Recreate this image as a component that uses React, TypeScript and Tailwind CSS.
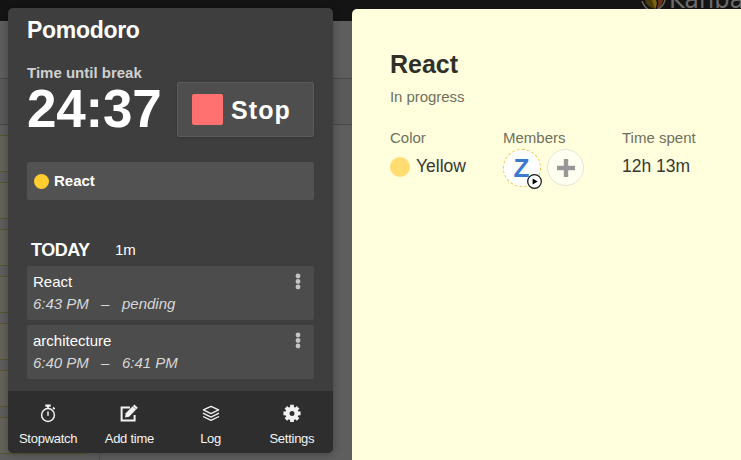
import React from "react";

const navItems = [
  { label: "Stopwatch", icon: <StopwatchIcon /> },
  { label: "Add time", icon: <EditIcon /> },
  { label: "Log", icon: <LayersIcon /> },
  { label: "Settings", icon: <GearIcon /> },
];

const entries = [
  { name: "React", from: "6:43 PM", to: "pending" },
  { name: "architecture", from: "6:40 PM", to: "6:41 PM" },
];

function StopwatchIcon() {
  return (
    <svg width="18" height="20" viewBox="0 0 18 20" fill="none" stroke="#f2f2f2">
      <circle cx="9" cy="12" r="6.4" strokeWidth="1.5" />
      <path d="M6.3 2.7h5.4" strokeWidth="2.2" />
      <path d="M9 3v2.5M14 4.5l1.6 1.6" strokeWidth="1.8" />
      <path d="M9 8.6v4.2" strokeWidth="1.5" />
    </svg>
  );
}

function EditIcon() {
  return (
    <svg width="18" height="20" viewBox="0 0 18 20" fill="none" stroke="#f2f2f2">
      <path d="M10 4.6H1.6v13h13V12" strokeWidth="2" />
      <path d="M5 14.4l.7-4.2L14.4 1.4l3.4 3.4-8.7 8.9z" fill="#f2f2f2" stroke="none" />
      <path d="M12.6 3l3.6 3.6" stroke="#2e2e2e" strokeWidth=".5" />
    </svg>
  );
}

function LayersIcon() {
  return (
    <svg width="18" height="20" viewBox="0 0 18 20" fill="none" stroke="#f2f2f2" strokeWidth="1.3" strokeLinejoin="round">
      <path d="M9 3.3l7.6 3.6L9 10.6 1.4 6.9z" />
      <path d="M1 10.2l8 3.9 8-3.9M1 13.5l8 3.9 8-3.9" />
    </svg>
  );
}

function GearIcon() {
  return (
    <svg width="18" height="20" viewBox="0 0 18 20" fill="none" stroke="#f2f2f2">
      <circle cx="9" cy="10.4" r="4.6" strokeWidth="4.2" />
      <path
        d="M9 1.8v3M9 16v3M.4 10.4h3M14.6 10.4h3M2.9 4.3l2 2M13.1 14.5l2 2M15.1 4.3l-2 2M4.9 14.5l-2 2"
        strokeWidth="3.8"
      />
    </svg>
  );
}

function Dots() {
  return (
    <svg width="6" height="17" viewBox="0 0 6 17" fill="#c4c4c4">
      <circle cx="3" cy="3" r="2.4" />
      <circle cx="3" cy="8.5" r="2.4" />
      <circle cx="3" cy="14" r="2.4" />
    </svg>
  );
}

function Board() {
  return (
    <div className="flex h-full flex-col bg-[#5e5e5e]">
      <div className="flex h-[21px] shrink-0 justify-end overflow-hidden bg-[#141414]">
        <svg width="28" height="12" viewBox="0 0 28 12" className="shrink-0">
          <path d="M4 0q1 7 11 9l-3-9z" fill="#4b3d0b" />
          <path d="M11 0l3 9q3-5 1-9z" fill="#7c6510" />
          <path d="M17 0q1 4-1 9 5-2 6-9z" fill="#693416" />
          <path d="M1 1q2 6 7 9M24 0q-1 6-8 10" fill="none" stroke="#686868" strokeWidth="1.5" />
        </svg>
        <div className="-mt-[14px] w-[72px] overflow-hidden font-['DejaVu_Sans',sans-serif] text-[24px] leading-[28px] whitespace-nowrap text-[#6c6c6c]">
          Kanba
        </div>
      </div>
      <div className="h-[58px] shrink-0 border-b border-[#484848]" />
      <div className="h-[46px] shrink-0 border-b border-[#484848] bg-[#5a5a5a]" />
      <div className="flex flex-1">
        <div className="flex w-[100px] flex-col gap-[10px] border-r border-[#505050] pt-[10px] pr-3">
          {[0, 1, 2, 3, 4, 5, 6].map((i) => (
            <div key={i} className="h-[37px] shrink-0 border-y border-[#5b552c] bg-[#64635a]" />
          ))}
        </div>
      </div>
    </div>
  );
}

function Timer() {
  return (
    <section className="flex h-[445px] w-[325px] flex-col overflow-hidden rounded-[5px] bg-[#3e3e3e] text-[15px] text-white shadow-[0_1px_8px_rgba(0,0,0,0.3)]">
      <div className="flex flex-1 flex-col px-[19px]">
        <h1 className="mt-[9px] text-[23px] leading-[26px] font-bold tracking-[-0.3px]">Pomodoro</h1>
        <div className="mt-[21px] flex h-[73px] justify-between">
          <div>
            <div className="leading-[17px] font-bold text-[#d0d0d0]">Time until break</div>
            <div className="text-[53px] leading-[56px] font-bold tracking-[-0.2px]">24:37</div>
          </div>
          <button className="mt-[18px] flex h-[55px] w-[137px] items-center rounded-[2px] border border-[#5b5b5b] bg-[#4e4e4e] pl-[14px] shadow-sm">
            <span className="size-[31px] rounded-[2px] bg-[#ff7070]" />
            <span className="ml-[8px] text-[25px] leading-[28px] font-bold tracking-[1.1px]">Stop</span>
          </button>
        </div>
        <div className="mt-[25px] flex h-[38px] shrink-0 items-center rounded-[2px] bg-[#525252] pl-[7px] font-bold">
          <span className="mr-[5px] size-[15px] rounded-full bg-[#ffcd30]" />
          React
        </div>
        <div className="mt-[39px] flex h-[23px] shrink-0 items-center pl-[4px]">
          <h2 className="w-[84px] text-[18px] font-bold tracking-[-0.5px]">TODAY</h2>
          <span>1m</span>
        </div>
        <div className="mt-[4px] flex flex-col gap-[5px]">
          {entries.map((e) => (
            <div key={e.name} className="flex h-[54px] justify-between rounded-[2px] bg-[#4c4c4c] pt-[5px] pr-[13px] pl-[6px]">
              <div>
                <div className="leading-[22px]">{e.name}</div>
                <div className="flex leading-[22px] text-[#d8d8d8] italic">
                  <span className="w-[68px]">{e.from}</span>
                  <span className="w-[21px]">–</span>
                  <span>{e.to}</span>
                </div>
              </div>
              <div className="mt-[2px]">
                <Dots />
              </div>
            </div>
          ))}
        </div>
      </div>
      <nav className="grid h-[62px] shrink-0 grid-cols-4 bg-[#2e2e2e] text-[13px] tracking-[-0.25px]">
        {navItems.map((n) => (
          <div key={n.label} className="flex flex-col items-center pt-[12px] pr-px text-[#f4f4f4]">
            {n.icon}
            <span className="mt-[8px] leading-[16px]">{n.label}</span>
          </div>
        ))}
      </nav>
    </section>
  );
}

function CardDetails() {
  return (
    <section className="h-[451px] w-[389px] rounded-tl-[5px] bg-[#ffffdd] pt-[40px] pl-[38px] text-[15px] text-[#6f6f60]">
      <h1 className="text-[25px] leading-[30px] font-bold text-[#30302a]">React</h1>
      <div className="mt-[9px] leading-[18px] tracking-[-0.05px]">In progress</div>
      <div className="mt-[23px] flex">
        <div className="w-[113px]">
          <div className="leading-[18px]">Color</div>
          <div className="mt-[1px] flex h-[37px] items-center text-[17.5px] text-[#383832]">
            <span className="mr-[6px] size-[20px] rounded-full bg-[#ffdd70]" />
            Yellow
          </div>
        </div>
        <div className="w-[119px]">
          <div className="leading-[18px]">Members</div>
          <div className="mt-[2px] flex gap-[6px]">
            <div className="relative flex size-[38px] items-center justify-center rounded-full border border-dashed border-[#edc750] bg-white pr-px text-[26px] font-bold text-[#3b78d0]">
              Z
              <svg className="absolute right-[-2px] bottom-[-3px]" width="15" height="15" viewBox="0 0 15 15">
                <circle cx="7.5" cy="7.5" r="6.8" fill="#fff" stroke="#111" strokeWidth="1.2" />
                <path d="M5.6 4.6v5.8l5-2.9z" fill="#000" />
              </svg>
            </div>
            <div className="flex size-[37px] items-center justify-center rounded-full border border-[#e4e4d4] bg-[#fffff2]">
              <svg width="18" height="18" viewBox="0 0 18 18" stroke="#999" strokeWidth="4.4">
                <path d="M9 0v18M0 9h18" />
              </svg>
            </div>
          </div>
        </div>
        <div>
          <div className="leading-[18px]">Time spent</div>
          <div className="mt-[1px] flex h-[37px] items-center text-[17.5px] text-[#383832]">12h 13m</div>
        </div>
      </div>
    </section>
  );
}

export default function App() {
  return (
    <main className="relative h-[460px] w-[741px] overflow-hidden font-['Liberation_Sans',Arial,sans-serif]">
      <Board />
      <div className="absolute inset-0 flex items-start gap-[19px] pl-[8px]">
        <div className="mt-[8px]">
          <Timer />
        </div>
        <div className="mt-[9px]">
          <CardDetails />
        </div>
      </div>
    </main>
  );
}
